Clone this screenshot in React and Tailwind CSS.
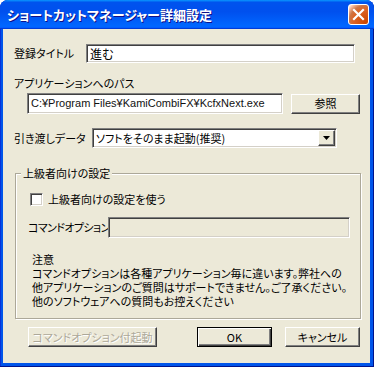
import React from "react";

// classic 3D edges used by the dialog controls
const sunken =
  "border border-t-[#808080] border-l-[#808080] border-b-white border-r-white shadow-[inset_1px_1px_#404040,inset_-1px_-1px_#d4d0c8]";
const raised =
  "border border-t-white border-l-white border-b-[#404040] border-r-[#404040] shadow-[inset_-1px_-1px_#808080] bg-[#ece9d8]";

const CloseButton = () => (
  <button className="w-[21px] h-[21px] rounded-[3px] border border-white flex items-center justify-center bg-[radial-gradient(circle_at_90%_90%,#cc4600_0%,#dc6527_55%,#cd7546_70%,#ffccb2_90%,#fff_100%)]">
    <svg width="13" height="13" viewBox="0 0 13 13">
      <path d="M2 2 L11 11 M11 2 L2 11" stroke="#fff" strokeWidth="2.2" strokeLinecap="square" />
    </svg>
  </button>
);

const DropArrow = () => (
  <svg width="7" height="4" viewBox="0 0 7 4">
    <path d="M0 0 H7 L3.5 4 Z" fill="#000" />
  </svg>
);

export default function App() {
  const notes = [
    "注意",
    "コマンドオプションは各種アプリケーション毎に違います。弊社への",
    "他アプリケーションのご質問はサポートできません。ご了承ください。",
    "他のソフトウェアへの質問もお控えください",
  ];

  return (
    <div className="w-[374px] h-[367px] bg-white text-[11px] text-black whitespace-nowrap [font-family:'Noto_Sans_CJK_JP',sans-serif] [font-feature-settings:'palt']">
      <div className="flex flex-col h-full rounded-t-[8px] overflow-hidden bg-[#0055ea] shadow-[inset_-1px_-1px_#00138c,inset_1px_1px_#0831d9]">
        {/* Title bar */}
        <div className="h-[29px] shrink-0 flex items-center justify-between pl-[7px] pr-[5px] bg-[linear-gradient(180deg,#0997ff,#0053ee_8%,#0050ee_40%,#0066ff_88%,#0066ff_93%,#005bff_95%,#003dd7_96%,#003dd7)]">
          <span className="text-white font-bold text-[13px] leading-none [text-shadow:1px_1px_#0f1089]">
            ショートカットマネージャー詳細設定
          </span>
          <CloseButton />
        </div>

        {/* Body */}
        <div className="flex-1 ml-[3px] mr-[4px] mb-[4px] bg-[#ece9d8] flex flex-col pt-[15px]">
          <div className="flex items-center h-[19px]">
            <span className="ml-[11px] w-[72px]">登録タイトル</span>
            <div className={`${sunken} bg-white w-[269px] h-[19px] flex items-center pl-[3px] text-[12px]`}>進む</div>
          </div>

          <div className="ml-[11px] mt-[12px] h-[16px] leading-[16px]">アプリケーションへのパス</div>

          <div className="flex items-center h-[21px] mt-[2px]">
            <div
              className={`${sunken} bg-white ml-[24px] w-[256px] h-[21px] flex items-center pl-[3px] text-[11px] [font-family:'Liberation_Sans',sans-serif] text-[#111]`}
            >
              C:¥Program Files¥KamiCombiFX¥KcfxNext.exe
            </div>
            <button className={`${raised} ml-[8px] w-[69px] h-[20px] flex items-center justify-center`}>参照</button>
          </div>

          <div className="flex items-center h-[20px] mt-[14px]">
            <span className="ml-[11px] w-[78px]">引き渡しデータ</span>
            <div className={`${sunken} bg-white w-[245px] h-[20px] p-[1px] flex`}>
              <div className="flex-1 flex items-center pl-[2px]">ソフトをそのまま起動(推奨)</div>
              <div className={`${raised} w-[17px] h-full flex items-center justify-center`}>
                <DropArrow />
              </div>
            </div>
          </div>

          {/* Advanced group */}
          <fieldset className="ml-[12px] mt-[17px] w-[346px] h-[154px] border border-[#aca899] shadow-[inset_1px_1px_#fff,1px_1px_#fff]">
            <legend className="ml-[5px] px-[2px] leading-[16px] bg-[#ece9d8]">上級者向けの設定</legend>

            <div className="flex items-center h-[13px] mt-[12px] ml-[14px]">
              <div className={`${sunken} bg-white w-[13px] h-[13px]`} />
              <span className="ml-[5px]">上級者向けの設定を使う</span>
            </div>

            <div className="flex items-center h-[21px] mt-[11px]">
              <span className="ml-[12px] w-[80px] tracking-[-0.6px]">コマンドオプション</span>
              <div className={`${sunken} bg-[#ece9d8] w-[242px] h-[21px]`} />
            </div>

            <div className="ml-[16px] mt-[14px] leading-[14px]">
              {notes.map((line, i) => (
                <div key={i}>{line}</div>
              ))}
            </div>
          </fieldset>

          {/* Buttons */}
          <div className="flex items-center h-[20px] mt-[8px]">
            <button
              disabled
              className={`${raised} ml-[25px] w-[129px] h-[20px] flex items-center justify-center text-[#aca899] [text-shadow:1px_1px_#fff]`}
            >
              コマンドオプション付起動
            </button>
            <button className="ml-[40px] w-[75px] h-[20px] flex items-center justify-center bg-[#ece9d8] border border-black shadow-[inset_1px_1px_#fff,inset_-1px_-1px_#404040,inset_-2px_-2px_#808080]">
              OK
            </button>
            <button className={`${raised} ml-[13px] w-[75px] h-[20px] flex items-center justify-center`}>キャンセル</button>
          </div>
        </div>
      </div>
    </div>
  );
}
